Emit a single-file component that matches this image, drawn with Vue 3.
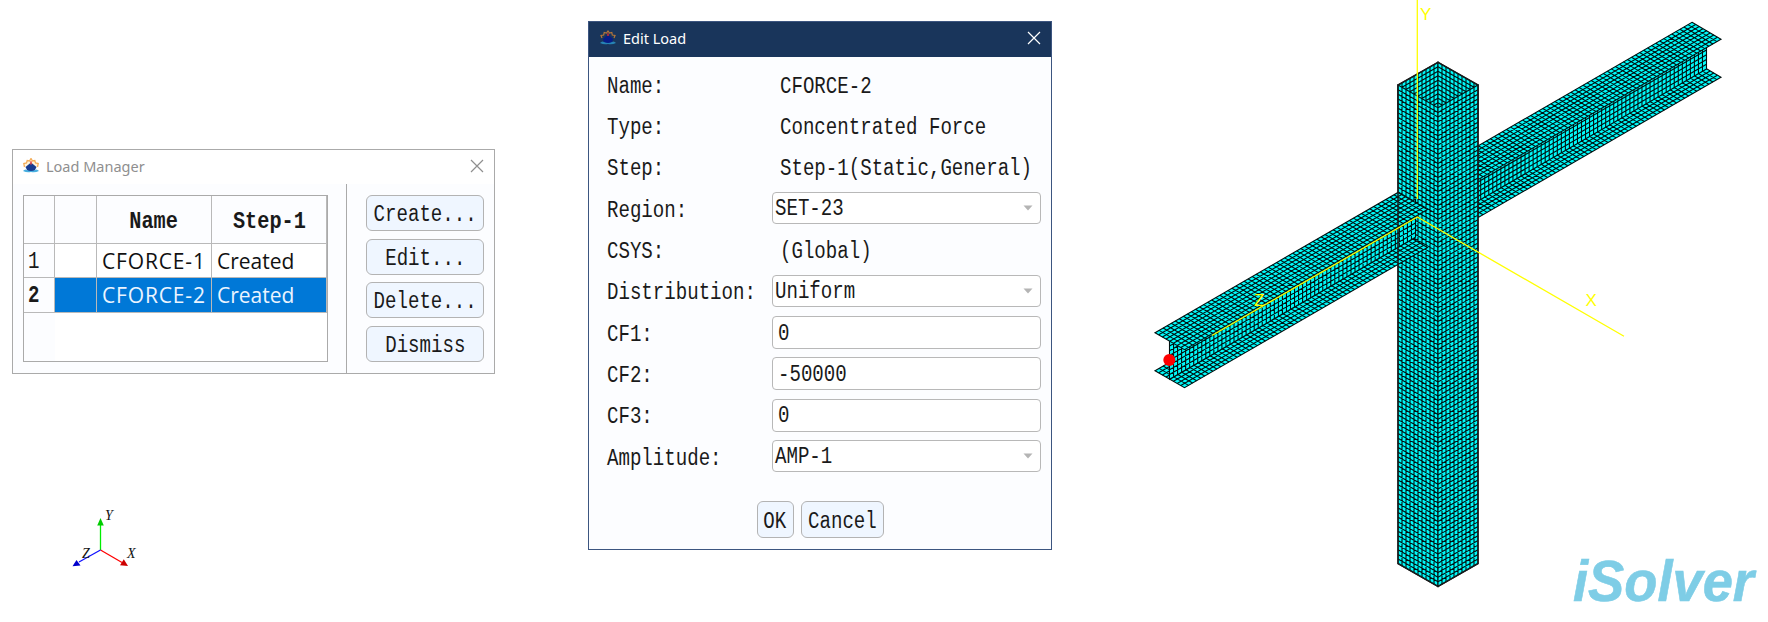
<script setup>
const rows = [
  { label: 'Name:', kind: 'text', value: 'CFORCE-2' },
  { label: 'Type:', kind: 'text', value: 'Concentrated Force' },
  { label: 'Step:', kind: 'text', value: 'Step-1(Static,General)' },
  { label: 'Region:', kind: 'combo', value: 'SET-23' },
  { label: 'CSYS:', kind: 'text', value: '(Global)' },
  { label: 'Distribution:', kind: 'combo', value: 'Uniform' },
  { label: 'CF1:', kind: 'input', value: '0' },
  { label: 'CF2:', kind: 'input', value: '-50000' },
  { label: 'CF3:', kind: 'input', value: '0' },
  { label: 'Amplitude:', kind: 'combo', value: 'AMP-1' },
]
const actions = ['Create...', 'Edit...', 'Delete...', 'Dismiss']

// A panel is a parallelogram: origin, two edge vectors and the cell count along each.
function panel(ox, oy, ux, uy, vx, vy, nu, nv) {
  const f = (n) => n.toFixed(2)
  const outline = `M${f(ox)} ${f(oy)}l${f(ux)} ${f(uy)}l${f(vx)} ${f(vy)}l${f(-ux)} ${f(-uy)}z`
  let mesh = ''
  for (let i = 1; i < nu; i++) mesh += `M${f(ox + (ux * i) / nu)} ${f(oy + (uy * i) / nu)}l${f(vx)} ${f(vy)}`
  for (let j = 1; j < nv; j++) mesh += `M${f(ox + (vx * j) / nv)} ${f(oy + (vy * j) / nv)}l${f(ux)} ${f(uy)}`
  return { outline, mesh }
}
const H = 38
const panels = [
  // rear beam: bottom flange, web, top flange
  panel(1692, 60.3, 29, 17, -250, 144.4, 8, 62),
  panel(1706.5, 31, 0, H, -250, 144.4, 8, 62),
  panel(1692, 22.3, 29, 17, -250, 144.4, 8, 62),
  // column: inner walls, then the two outer faces
  panel(1438, 62.3, -40, 22.8, 0, 45, 10, 10),
  panel(1438, 62.3, 40, 22.8, 0, 45, 10, 10),
  panel(1398, 85, 40, 22.8, 0, 478.7, 10, 103),
  panel(1438, 107.8, 40, -22.8, 0, 478.7, 10, 103),
  // front beam: bottom flange, web, top flange
  panel(1155, 370.7, 29.5, 17, 243, -140.3, 8, 60),
  panel(1169.5, 341.2, 0, H, 246, -142, 8, 61),
  panel(1155, 332.7, 29.5, 17, 243, -140.3, 8, 60),
]
</script>

<template>
  <main class="stage">
    <svg class="scene" viewBox="0 0 1768 622" width="1768" height="622">
      <g v-for="(p, i) in panels" :key="i">
        <path class="face" :d="p.outline" />
        <path class="mesh" :d="p.mesh" />
      </g>
      <path class="rim" d="M1398 563.5V85L1438 62.3L1478 85V563.5L1438 586.5Z" />
      <g class="axes">
        <path d="M1417.3 0V199" />
        <path d="M1212 335.5L1417.3 217L1624 336.3" />
        <text x="1420" y="20">Y</text>
        <text x="1585.5" y="306">X</text>
        <text x="1254" y="306">Z</text>
      </g>
      <circle cx="1169.3" cy="360" r="6" fill="#f00" />
      <g class="triad">
        <path d="M100.5 550V524" stroke="#0e0" />
        <path d="M100.5 550L122 562.5" stroke="#f00" />
        <path d="M100.5 550L79 562" stroke="#11f" />
        <path d="M100.5 518L97.2 525.5H103.8Z" fill="#0c0" />
        <path d="M128 566L120 565.2L123.8 559.3Z" fill="#c00" />
        <path d="M72.5 566.3L76.5 560L80.5 565.6Z" fill="#00c" />
        <text x="105" y="520">Y</text>
        <text x="127" y="558">X</text>
        <text x="82" y="558">Z</text>
      </g>
      <text class="brand" x="1573" y="601" textLength="181" lengthAdjust="spacingAndGlyphs">iSolver</text>
    </svg>

    <section class="window manager">
      <header class="bar">
        <svg class="logo" viewBox="0 0 16 16" width="16" height="16">
          <path d="M1.500 9L.8 5.500L3.500 5L4.200 2.500L6.500 3L8 .5L9.500 3L11.800 2.500L12.500 5L15.200 5.500L14.500 9" fill="#fff3dc" stroke="#f4ad58" stroke-width="1.300" />
          <path d="M2.500 9L8 4.500L13.500 9L11.500 13H4.500Z" fill="#173b91" />
          <path d="M7.200 3.200H8.800V6.500H7.200Z" fill="#e84a4a" />
          <path d="M0 13Q2 10.500 4 12Q8 14 12 12Q14 10.500 16 13Q12 15 8 14Q4 15 0 13" fill="#48afe0" />
        </svg>
        <span class="caption">Load Manager</span>
        <svg class="close" viewBox="0 0 14 14" width="14" height="14"><path d="M1 1L13 13M13 1L1 13" /></svg>
      </header>
      <div class="split">
        <div class="left">
          <div class="table">
            <div class="tr head"><span class="n"></span><span class="e"></span><span class="c"><b class="sim">Name</b></span><span class="d"><b class="sim">Step-1</b></span></div>
            <div class="tr"><span class="n"><i class="sim">1</i></span><span class="e"></span><span class="c">CFORCE-1</span><span class="d">Created</span></div>
            <div class="tr on"><span class="n"><b class="sim">2</b></span><span class="e"></span><span class="c">CFORCE-2</span><span class="d">Created</span></div>
            <div class="rest"><span class="n"></span></div>
          </div>
        </div>
        <div class="right">
          <button v-for="a in actions" :key="a" class="btn"><span class="sim">{{ a }}</span></button>
        </div>
      </div>
    </section>

    <section class="window edit">
      <header class="bar">
        <svg class="logo" viewBox="0 0 16 16" width="16" height="16">
          <path d="M2 8L1 5.500L3.700 5L4.200 2.500L6.500 3L8 1L9.500 3L11.800 2.500L12.300 5L15 5.500L14 8" fill="none" stroke="#b5763a" stroke-width="1.200" />
          <path d="M3 9L8 4.500L13 9L12 13H4Z" fill="#071c86" />
          <path d="M7.200 3.200H8.800V6H7.200Z" fill="#c62a3a" />
          <path d="M0 13Q2 10.500 4 12Q8 14 12 12Q14 10.500 16 13Q12 15 8 14Q4 15 0 13" fill="#2683b4" />
        </svg>
        <span class="caption">Edit Load</span>
        <svg class="close" viewBox="0 0 14 14" width="14" height="14"><path d="M1 1L13 13M13 1L1 13" /></svg>
      </header>
      <div class="form">
        <div v-for="r in rows" :key="r.label" class="row">
          <label class="label"><span class="sim">{{ r.label }}</span></label>
          <div :class="['field', r.kind]">
            <span class="sim">{{ r.value }}</span>
            <svg v-if="r.kind === 'combo'" class="arrow" width="10" height="6" viewBox="0 0 10 6"><path d="M.5 .5H9.500L5 5.500Z" fill="#b4b4b4" /></svg>
          </div>
        </div>
      </div>
      <footer class="foot">
        <button class="btn ok"><span class="sim">OK</span></button>
        <button class="btn cancel"><span class="sim">Cancel</span></button>
      </footer>
    </section>
  </main>
</template>

<style>
body { margin: 0; background: #fff; overflow: hidden; }
</style>

<style scoped>
* { box-sizing: border-box; }
.stage { position: relative; width: 1768px; height: 622px; background: #fff; overflow: hidden; }
.scene { position: absolute; left: 0; top: 0; overflow: visible; }
.face { fill: #00fafa; stroke: #001010; stroke-width: 1.100; }
.mesh { fill: none; stroke: #001010; stroke-width: 1.100; }
.rim { fill: none; stroke: #1a1a1a; stroke-width: 1.500; }
.axes path { fill: none; stroke: #ff0; stroke-width: 1.300; }
.axes text { fill: #ff0; font: 17px "Liberation Sans", sans-serif; }
.triad path { stroke-width: 1.300; }
.triad text { font: italic 14px "Liberation Serif", serif; fill: #111; }
.brand { fill: #7ecde6; stroke: #7ecde6; stroke-width: .6; font: italic 700 58px "Liberation Sans", sans-serif; }

.sim { display: inline-block; font-family: "Liberation Mono", monospace; font-size: 23px; font-style: normal; line-height: 26px; color: #1a1a1a; white-space: pre; transform: translateY(1px) scaleX(.83); transform-origin: 0 50%; }
.window { position: absolute; display: flex; flex-direction: column; background: #fcfdff; }
.bar { display: flex; align-items: center; flex: none; }
.caption { font-family: "Noto Sans", sans-serif; flex: 1; }
.close path { fill: none; stroke: currentColor; stroke-width: 1.200; }
.btn { display: flex; align-items: center; justify-content: center; margin: 0; padding: 0; border: 1.500px solid #b3b3b3; border-radius: 6px; background: #eff6ff; }
.btn .sim { transform: translateY(2px) scaleX(.83); transform-origin: 50% 50%; }

.manager { left: 12px; top: 149px; width: 483px; height: 225px; border: 1px solid #aaa; }
.manager .bar { height: 34px; padding: 0 10px 2px 10px; background: #fff; color: #8f8f8f; }
.manager .caption { font-size: 14.500px; margin-left: 7px; }
.split { display: flex; flex: 1; }
.left { width: 334px; padding: 11px 0 0 10px; border-right: 1px solid #aaa; }
.right { display: flex; flex-direction: column; gap: 7.400px; padding: 11px 0 0 19px; }
.right .btn { width: 118px; height: 36.200px; }
.table { width: 305px; height: 167px; border: 1px solid #aaa; background: #fff; font: 21px "Open Sans", sans-serif; color: #111; }
.tr { display: flex; height: 34.300px; border-bottom: 1px solid #b9b9b9; }
.tr span { display: flex; align-items: center; border-right: 1px solid #b9b9b9; flex: none; }
.tr .n, .rest .n { width: 31px; background: #fcfdff; }
.n .sim { margin-left: 4px; border: 0; }
.e { width: 42px; }
.c { width: 115px; padding-left: 5px; letter-spacing: .85px; }
.c .sim { letter-spacing: 0; }
.d { width: 115px; padding-left: 5px; }
.head { height: 48px; }
.head .c, .head .d { justify-content: center; padding: 0; }
.head span { background: #fcfdff; }
.head .sim { transform: translateY(1px) scaleX(.88); transform-origin: 50% 50%; margin-top: 3px; }
.on .e, .on .c, .on .d { background: #0078d7; color: #eaf4ff; }
.rest { display: flex; height: 48px; }

.edit { left: 588px; top: 21px; width: 464px; height: 529px; border: 1px solid #3c5580; }
.edit .bar { height: 35px; background: #19355b; color: #fff; padding: 0 10px 3px 11px; }
.edit .caption { font-size: 14.500px; margin-left: 7px; }
.form { padding: 8px 10px 0 18px; height: 427px; flex: none; }
.row { display: flex; align-items: center; height: 41.330px; }
.label { width: 165px; display: flex; flex: none; }
.field { display: flex; align-items: center; width: 269px; height: 33px; flex: none; }
.text { padding-left: 8px; }
.combo, .input { border: 1.500px solid #b8b8b8; border-radius: 4px; background: #fff; }
.combo { height: 32px; margin-top: -3px; padding-left: 2px; justify-content: space-between; padding-right: 7px; }
.input { padding-left: 5px; margin-top: -2px; }
.foot { display: flex; justify-content: center; gap: 7px; padding-top: 17px; flex: 1; border-top: 0; }
.foot .btn { height: 37px; }
.ok { width: 37px; }
.cancel { width: 83px; }
.foot .sim { margin: 0 -6px; }
</style>
